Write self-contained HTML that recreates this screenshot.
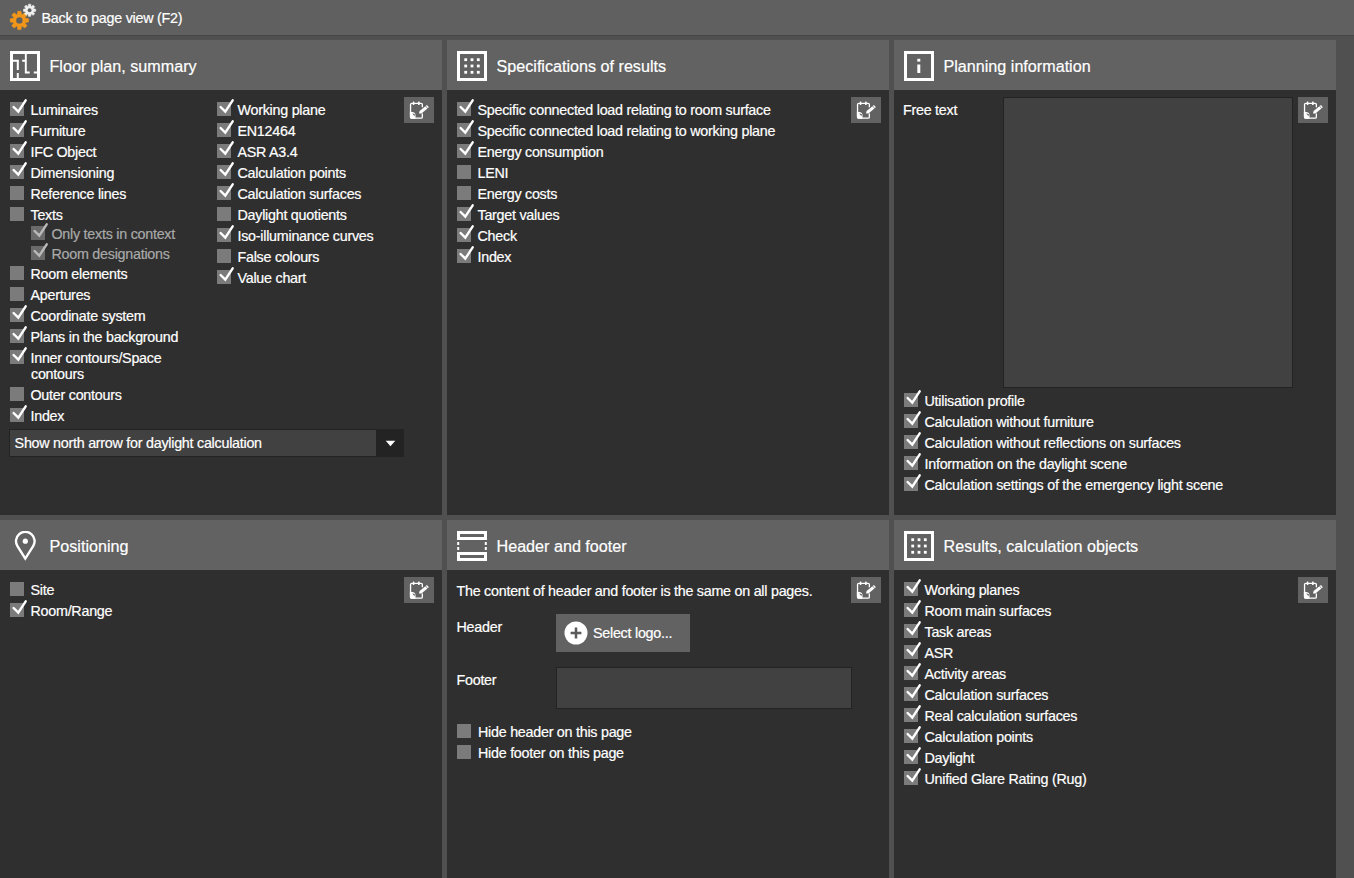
<!DOCTYPE html>
<html><head><meta charset="utf-8"><style>
html,body{margin:0;padding:0;}
body{width:1354px;height:878px;overflow:hidden;position:relative;background:#505050;font-family:"Liberation Sans",sans-serif;}
.t{position:absolute;white-space:nowrap;line-height:1;-webkit-text-stroke:0.2px currentColor;}
.cb{position:absolute;width:14px;height:14px;}
.ck{position:absolute;}
.ph{position:absolute;background:#626262;}
.pb{position:absolute;background:#2f2f2f;}
.ic{position:absolute;width:30px;height:30px;}
.ic svg{display:block;}
.eb{position:absolute;width:30px;height:26px;background:#626262;}
.eb svg{display:block;}
</style></head><body>
<div style="position:absolute;left:0;top:0;width:1354px;height:35px;background:#606060"></div><div style="position:absolute;left:0;top:35px;width:1354px;height:1px;background:#454545"></div><svg width="40" height="34" viewBox="0 0 40 34" style="position:absolute;left:0;top:0"><path d="M17.34 14.55 L17.81 11.24 L20.99 11.24 L21.46 14.55 L22.08 14.81 L24.75 12.80 L27.00 15.05 L24.99 17.72 L25.25 18.34 L28.56 18.81 L28.56 21.99 L25.25 22.46 L24.99 23.08 L27.00 25.75 L24.75 28.00 L22.08 25.99 L21.46 26.25 L20.99 29.56 L17.81 29.56 L17.34 26.25 L16.72 25.99 L14.05 28.00 L11.80 25.75 L13.81 23.08 L13.55 22.46 L10.24 21.99 L10.24 18.81 L13.55 18.34 L13.81 17.72 L11.80 15.05 L14.05 12.80 L16.72 14.81 Z" fill="#f2961a" stroke="#f2961a" stroke-width="0.6" stroke-linejoin="round"/><circle cx="19.4" cy="20.4" r="3.2" fill="#606060"/><path d="M28.22 6.18 L28.51 4.15 L30.69 4.15 L30.98 6.18 L31.51 6.40 L33.14 5.16 L34.69 6.71 L33.45 8.34 L33.67 8.87 L35.70 9.16 L35.70 11.34 L33.67 11.63 L33.45 12.16 L34.69 13.79 L33.14 15.34 L31.51 14.10 L30.98 14.32 L30.69 16.35 L28.51 16.35 L28.22 14.32 L27.69 14.10 L26.06 15.34 L24.51 13.79 L25.75 12.16 L25.53 11.63 L23.50 11.34 L23.50 9.16 L25.53 8.87 L25.75 8.34 L24.51 6.71 L26.06 5.16 L27.69 6.40 Z" fill="#efefef" stroke="#efefef" stroke-width="0.6" stroke-linejoin="round"/><circle cx="29.6" cy="10.25" r="1.9" fill="#606060"/></svg><div class="t" style="left:41.5px;top:11.00px;font-size:14.3px;color:#ffffff;letter-spacing:-0.25px;">Back to page view (F2)</div><div class="ph" style="left:0px;top:40px;width:442px;height:50px"></div><div class="pb" style="left:0px;top:90px;width:442px;height:425px"></div><div class="ic" style="left:10px;top:51px"><svg width="30" height="30" viewBox="0 0 30 30">
<rect x="1.5" y="1.5" width="27" height="27" fill="none" stroke="#fff" stroke-width="3"/>
<path d="M3 9.8 H8.5 M12.2 9.8 H16" stroke="#fff" stroke-width="1.9" fill="none"/>
<path d="M7.8 9 V19 M7.8 22 V28" stroke="#fff" stroke-width="2" fill="none"/>
<path d="M15.8 3 V21.5 H19.7 M23.8 21.5 H27" stroke="#fff" stroke-width="1.9" fill="none"/>
</svg></div><div class="t" style="left:49.5px;top:58.00px;font-size:16.15px;color:#ffffff;">Floor plan, summary</div><div class="ph" style="left:447px;top:40px;width:442px;height:50px"></div><div class="pb" style="left:447px;top:90px;width:442px;height:425px"></div><div class="ic" style="left:457px;top:51px"><svg width="30" height="30" viewBox="0 0 30 30">
<rect x="1.5" y="1.5" width="27" height="27" fill="none" stroke="#fff" stroke-width="3"/>
<rect x="7.30" y="7.30" width="2.8" height="2.8" fill="#fff"/><rect x="7.30" y="13.60" width="2.8" height="2.8" fill="#fff"/><rect x="7.30" y="19.90" width="2.8" height="2.8" fill="#fff"/><rect x="13.60" y="7.30" width="2.8" height="2.8" fill="#fff"/><rect x="13.60" y="13.60" width="2.8" height="2.8" fill="#fff"/><rect x="13.60" y="19.90" width="2.8" height="2.8" fill="#fff"/><rect x="19.90" y="7.30" width="2.8" height="2.8" fill="#fff"/><rect x="19.90" y="13.60" width="2.8" height="2.8" fill="#fff"/><rect x="19.90" y="19.90" width="2.8" height="2.8" fill="#fff"/>
</svg></div><div class="t" style="left:496.5px;top:58.00px;font-size:16.15px;color:#ffffff;">Specifications of results</div><div class="ph" style="left:894px;top:40px;width:442px;height:50px"></div><div class="pb" style="left:894px;top:90px;width:442px;height:425px"></div><div class="ic" style="left:904px;top:51px"><svg width="30" height="30" viewBox="0 0 30 30">
<rect x="1.5" y="1.5" width="27" height="27" fill="none" stroke="#fff" stroke-width="3"/>
<rect x="13.3" y="13.5" width="3" height="8.5" fill="#fff"/>
<rect x="13.3" y="7.8" width="3" height="2.8" fill="#fff"/>
</svg></div><div class="t" style="left:943.5px;top:58.00px;font-size:16.15px;color:#ffffff;">Planning information</div><div class="ph" style="left:0px;top:520px;width:442px;height:50px"></div><div class="pb" style="left:0px;top:570px;width:442px;height:308px"></div><div class="ic" style="left:10px;top:531px"><svg width="30" height="30" viewBox="0 0 30 30">
<path d="M15.3 27.6 L7.44 15.17 A9.3 9.3 0 1 1 23.16 15.17 Z" fill="none" stroke="#fff" stroke-width="2.4" stroke-linejoin="miter"/>
<circle cx="15.3" cy="10.2" r="2.6" fill="#fff"/>
</svg></div><div class="t" style="left:49.5px;top:538.00px;font-size:16.15px;color:#ffffff;">Positioning</div><div class="ph" style="left:447px;top:520px;width:442px;height:50px"></div><div class="pb" style="left:447px;top:570px;width:442px;height:308px"></div><div class="ic" style="left:457px;top:531px"><svg width="30" height="30" viewBox="0 0 30 30">
<rect x="1.5" y="1.5" width="27" height="6" fill="none" stroke="#fff" stroke-width="3"/>
<rect x="1.5" y="22.5" width="27" height="6" fill="none" stroke="#fff" stroke-width="3"/>
<rect x="0.2" y="11" width="2" height="3" fill="#fff"/>
<rect x="0.2" y="16" width="2" height="3" fill="#fff"/>
<rect x="27.8" y="11" width="2" height="3" fill="#fff"/>
<rect x="27.8" y="16" width="2" height="3" fill="#fff"/>
</svg></div><div class="t" style="left:496.5px;top:538.00px;font-size:16.15px;color:#ffffff;">Header and footer</div><div class="ph" style="left:894px;top:520px;width:442px;height:50px"></div><div class="pb" style="left:894px;top:570px;width:442px;height:308px"></div><div class="ic" style="left:904px;top:531px"><svg width="30" height="30" viewBox="0 0 30 30">
<rect x="1.5" y="1.5" width="27" height="27" fill="none" stroke="#fff" stroke-width="3"/>
<rect x="7.30" y="7.30" width="2.8" height="2.8" fill="#fff"/><rect x="7.30" y="13.60" width="2.8" height="2.8" fill="#fff"/><rect x="7.30" y="19.90" width="2.8" height="2.8" fill="#fff"/><rect x="13.60" y="7.30" width="2.8" height="2.8" fill="#fff"/><rect x="13.60" y="13.60" width="2.8" height="2.8" fill="#fff"/><rect x="13.60" y="19.90" width="2.8" height="2.8" fill="#fff"/><rect x="19.90" y="7.30" width="2.8" height="2.8" fill="#fff"/><rect x="19.90" y="13.60" width="2.8" height="2.8" fill="#fff"/><rect x="19.90" y="19.90" width="2.8" height="2.8" fill="#fff"/>
</svg></div><div class="t" style="left:943.5px;top:538.00px;font-size:16.15px;color:#ffffff;">Results, calculation objects</div><div class="cb" style="left:10px;top:102px;background:#7b7b7b"></div><svg class="ck" style="left:8px;top:96px" width="22" height="22" viewBox="0 0 22 22"><path d="M5.6 11 L10.3 15.7 L17.7 4.3" fill="none" stroke="#ffffff" stroke-width="2.4" stroke-linecap="round" stroke-linejoin="miter"/></svg><div class="t" style="left:30.5px;top:103.00px;font-size:14.3px;color:#ffffff;letter-spacing:-0.25px;">Luminaires</div><div class="cb" style="left:10px;top:123px;background:#7b7b7b"></div><svg class="ck" style="left:8px;top:117px" width="22" height="22" viewBox="0 0 22 22"><path d="M5.6 11 L10.3 15.7 L17.7 4.3" fill="none" stroke="#ffffff" stroke-width="2.4" stroke-linecap="round" stroke-linejoin="miter"/></svg><div class="t" style="left:30.5px;top:124.00px;font-size:14.3px;color:#ffffff;letter-spacing:-0.25px;">Furniture</div><div class="cb" style="left:10px;top:144px;background:#7b7b7b"></div><svg class="ck" style="left:8px;top:138px" width="22" height="22" viewBox="0 0 22 22"><path d="M5.6 11 L10.3 15.7 L17.7 4.3" fill="none" stroke="#ffffff" stroke-width="2.4" stroke-linecap="round" stroke-linejoin="miter"/></svg><div class="t" style="left:30.5px;top:145.00px;font-size:14.3px;color:#ffffff;letter-spacing:-0.25px;">IFC Object</div><div class="cb" style="left:10px;top:165px;background:#7b7b7b"></div><svg class="ck" style="left:8px;top:159px" width="22" height="22" viewBox="0 0 22 22"><path d="M5.6 11 L10.3 15.7 L17.7 4.3" fill="none" stroke="#ffffff" stroke-width="2.4" stroke-linecap="round" stroke-linejoin="miter"/></svg><div class="t" style="left:30.5px;top:166.00px;font-size:14.3px;color:#ffffff;letter-spacing:-0.25px;">Dimensioning</div><div class="cb" style="left:10px;top:186px;background:#7b7b7b"></div><div class="t" style="left:30.5px;top:187.00px;font-size:14.3px;color:#ffffff;letter-spacing:-0.25px;">Reference lines</div><div class="cb" style="left:10px;top:207px;background:#7b7b7b"></div><div class="t" style="left:30.5px;top:208.00px;font-size:14.3px;color:#ffffff;letter-spacing:-0.25px;">Texts</div><div class="cb" style="left:31px;top:226px;background:#6a6a6a"></div><svg class="ck" style="left:29px;top:220px" width="22" height="22" viewBox="0 0 22 22"><path d="M5.6 11 L10.3 15.7 L17.7 4.3" fill="none" stroke="#b9b9b9" stroke-width="2.4" stroke-linecap="round" stroke-linejoin="miter"/></svg><div class="t" style="left:51.5px;top:227.00px;font-size:14.3px;color:#a9a9a9;letter-spacing:-0.25px;">Only texts in context</div><div class="cb" style="left:31px;top:246px;background:#6a6a6a"></div><svg class="ck" style="left:29px;top:240px" width="22" height="22" viewBox="0 0 22 22"><path d="M5.6 11 L10.3 15.7 L17.7 4.3" fill="none" stroke="#b9b9b9" stroke-width="2.4" stroke-linecap="round" stroke-linejoin="miter"/></svg><div class="t" style="left:51.5px;top:247.00px;font-size:14.3px;color:#a9a9a9;letter-spacing:-0.25px;">Room designations</div><div class="cb" style="left:10px;top:266px;background:#7b7b7b"></div><div class="t" style="left:30.5px;top:267.00px;font-size:14.3px;color:#ffffff;letter-spacing:-0.25px;">Room elements</div><div class="cb" style="left:10px;top:287px;background:#7b7b7b"></div><div class="t" style="left:30.5px;top:288.00px;font-size:14.3px;color:#ffffff;letter-spacing:-0.25px;">Apertures</div><div class="cb" style="left:10px;top:308px;background:#7b7b7b"></div><svg class="ck" style="left:8px;top:302px" width="22" height="22" viewBox="0 0 22 22"><path d="M5.6 11 L10.3 15.7 L17.7 4.3" fill="none" stroke="#ffffff" stroke-width="2.4" stroke-linecap="round" stroke-linejoin="miter"/></svg><div class="t" style="left:30.5px;top:309.00px;font-size:14.3px;color:#ffffff;letter-spacing:-0.25px;">Coordinate system</div><div class="cb" style="left:10px;top:329px;background:#7b7b7b"></div><svg class="ck" style="left:8px;top:323px" width="22" height="22" viewBox="0 0 22 22"><path d="M5.6 11 L10.3 15.7 L17.7 4.3" fill="none" stroke="#ffffff" stroke-width="2.4" stroke-linecap="round" stroke-linejoin="miter"/></svg><div class="t" style="left:30.5px;top:330.00px;font-size:14.3px;color:#ffffff;letter-spacing:-0.25px;">Plans in the background</div><div class="cb" style="left:10px;top:350px;background:#7b7b7b"></div><svg class="ck" style="left:8px;top:344px" width="22" height="22" viewBox="0 0 22 22"><path d="M5.6 11 L10.3 15.7 L17.7 4.3" fill="none" stroke="#ffffff" stroke-width="2.4" stroke-linecap="round" stroke-linejoin="miter"/></svg><div class="t" style="left:30.5px;top:351.00px;font-size:14.3px;color:#ffffff;letter-spacing:-0.25px;">Inner contours/Space</div><div class="t" style="left:31px;top:367.00px;font-size:14.3px;color:#ffffff;letter-spacing:-0.25px;">contours</div><div class="cb" style="left:10px;top:387px;background:#7b7b7b"></div><div class="t" style="left:30.5px;top:388.00px;font-size:14.3px;color:#ffffff;letter-spacing:-0.25px;">Outer contours</div><div class="cb" style="left:10px;top:408px;background:#7b7b7b"></div><svg class="ck" style="left:8px;top:402px" width="22" height="22" viewBox="0 0 22 22"><path d="M5.6 11 L10.3 15.7 L17.7 4.3" fill="none" stroke="#ffffff" stroke-width="2.4" stroke-linecap="round" stroke-linejoin="miter"/></svg><div class="t" style="left:30.5px;top:409.00px;font-size:14.3px;color:#ffffff;letter-spacing:-0.25px;">Index</div><div class="cb" style="left:217px;top:102px;background:#7b7b7b"></div><svg class="ck" style="left:215px;top:96px" width="22" height="22" viewBox="0 0 22 22"><path d="M5.6 11 L10.3 15.7 L17.7 4.3" fill="none" stroke="#ffffff" stroke-width="2.4" stroke-linecap="round" stroke-linejoin="miter"/></svg><div class="t" style="left:237.5px;top:103.00px;font-size:14.3px;color:#ffffff;letter-spacing:-0.25px;">Working plane</div><div class="cb" style="left:217px;top:123px;background:#7b7b7b"></div><svg class="ck" style="left:215px;top:117px" width="22" height="22" viewBox="0 0 22 22"><path d="M5.6 11 L10.3 15.7 L17.7 4.3" fill="none" stroke="#ffffff" stroke-width="2.4" stroke-linecap="round" stroke-linejoin="miter"/></svg><div class="t" style="left:237.5px;top:124.00px;font-size:14.3px;color:#ffffff;letter-spacing:-0.25px;">EN12464</div><div class="cb" style="left:217px;top:144px;background:#7b7b7b"></div><svg class="ck" style="left:215px;top:138px" width="22" height="22" viewBox="0 0 22 22"><path d="M5.6 11 L10.3 15.7 L17.7 4.3" fill="none" stroke="#ffffff" stroke-width="2.4" stroke-linecap="round" stroke-linejoin="miter"/></svg><div class="t" style="left:237.5px;top:145.00px;font-size:14.3px;color:#ffffff;letter-spacing:-0.25px;">ASR A3.4</div><div class="cb" style="left:217px;top:165px;background:#7b7b7b"></div><svg class="ck" style="left:215px;top:159px" width="22" height="22" viewBox="0 0 22 22"><path d="M5.6 11 L10.3 15.7 L17.7 4.3" fill="none" stroke="#ffffff" stroke-width="2.4" stroke-linecap="round" stroke-linejoin="miter"/></svg><div class="t" style="left:237.5px;top:166.00px;font-size:14.3px;color:#ffffff;letter-spacing:-0.25px;">Calculation points</div><div class="cb" style="left:217px;top:186px;background:#7b7b7b"></div><svg class="ck" style="left:215px;top:180px" width="22" height="22" viewBox="0 0 22 22"><path d="M5.6 11 L10.3 15.7 L17.7 4.3" fill="none" stroke="#ffffff" stroke-width="2.4" stroke-linecap="round" stroke-linejoin="miter"/></svg><div class="t" style="left:237.5px;top:187.00px;font-size:14.3px;color:#ffffff;letter-spacing:-0.25px;">Calculation surfaces</div><div class="cb" style="left:217px;top:207px;background:#7b7b7b"></div><div class="t" style="left:237.5px;top:208.00px;font-size:14.3px;color:#ffffff;letter-spacing:-0.25px;">Daylight quotients</div><div class="cb" style="left:217px;top:228px;background:#7b7b7b"></div><svg class="ck" style="left:215px;top:222px" width="22" height="22" viewBox="0 0 22 22"><path d="M5.6 11 L10.3 15.7 L17.7 4.3" fill="none" stroke="#ffffff" stroke-width="2.4" stroke-linecap="round" stroke-linejoin="miter"/></svg><div class="t" style="left:237.5px;top:229.00px;font-size:14.3px;color:#ffffff;letter-spacing:-0.25px;">Iso-illuminance curves</div><div class="cb" style="left:217px;top:249px;background:#7b7b7b"></div><div class="t" style="left:237.5px;top:250.00px;font-size:14.3px;color:#ffffff;letter-spacing:-0.25px;">False colours</div><div class="cb" style="left:217px;top:270px;background:#7b7b7b"></div><svg class="ck" style="left:215px;top:264px" width="22" height="22" viewBox="0 0 22 22"><path d="M5.6 11 L10.3 15.7 L17.7 4.3" fill="none" stroke="#ffffff" stroke-width="2.4" stroke-linecap="round" stroke-linejoin="miter"/></svg><div class="t" style="left:237.5px;top:271.00px;font-size:14.3px;color:#ffffff;letter-spacing:-0.25px;">Value chart</div><div class="eb" style="left:404px;top:97px"><svg width="30" height="26" viewBox="0 0 30 26">
<path d="M18.35 10.3 V7.6 Q18.35 6.4 17.15 6.4 H7.75 Q6.55 6.4 6.55 7.6 V19.95 Q6.55 21.15 7.75 21.15 H17.15 Q18.35 21.15 18.35 19.95 V16.5" fill="none" stroke="#fff" stroke-width="1.3"/>
<rect x="8.8" y="4.5" width="1.5" height="3.6" rx="0.4" fill="#fff"/>
<rect x="14.05" y="4.5" width="1.6" height="3.6" rx="0.4" fill="#fff"/>
<path d="M5.9 14.8 Q11.5 14.8 11.5 18 V21.8 H7.9 Q5.9 21.8 5.9 19.8 Z" fill="#fff"/>
<path d="M8.2 16.5 L10.9 17.1 L10.5 19.3 Z" fill="#626262"/>
<path d="M15 16.5 L15.6 14.07 L22.95 8.04 L24.85 10.36 L17.5 16.4 Z" fill="#fff"/>
<path d="M21.5 8.9 L23.7 11.6" stroke="#626262" stroke-width="0.7"/>
</svg></div><div style="position:absolute;left:9px;top:429px;width:395px;height:28px;background:#232323"></div><div style="position:absolute;left:10px;top:430px;width:366px;height:26px;background:#414141"></div><svg style="position:absolute;left:385px;top:440px" width="11" height="7" viewBox="0 0 11 7"><path d="M0.7 0.8 H10.3 L5.5 6.2 Z" fill="#fff"/></svg><div class="t" style="left:14.6px;top:436.00px;font-size:14.3px;color:#ffffff;letter-spacing:-0.25px;">Show north arrow for daylight calculation</div><div class="cb" style="left:457px;top:102px;background:#7b7b7b"></div><svg class="ck" style="left:455px;top:96px" width="22" height="22" viewBox="0 0 22 22"><path d="M5.6 11 L10.3 15.7 L17.7 4.3" fill="none" stroke="#ffffff" stroke-width="2.4" stroke-linecap="round" stroke-linejoin="miter"/></svg><div class="t" style="left:477.5px;top:103.00px;font-size:14.3px;color:#ffffff;letter-spacing:-0.25px;">Specific connected load relating to room surface</div><div class="cb" style="left:457px;top:123px;background:#7b7b7b"></div><svg class="ck" style="left:455px;top:117px" width="22" height="22" viewBox="0 0 22 22"><path d="M5.6 11 L10.3 15.7 L17.7 4.3" fill="none" stroke="#ffffff" stroke-width="2.4" stroke-linecap="round" stroke-linejoin="miter"/></svg><div class="t" style="left:477.5px;top:124.00px;font-size:14.3px;color:#ffffff;letter-spacing:-0.25px;">Specific connected load relating to working plane</div><div class="cb" style="left:457px;top:144px;background:#7b7b7b"></div><svg class="ck" style="left:455px;top:138px" width="22" height="22" viewBox="0 0 22 22"><path d="M5.6 11 L10.3 15.7 L17.7 4.3" fill="none" stroke="#ffffff" stroke-width="2.4" stroke-linecap="round" stroke-linejoin="miter"/></svg><div class="t" style="left:477.5px;top:145.00px;font-size:14.3px;color:#ffffff;letter-spacing:-0.25px;">Energy consumption</div><div class="cb" style="left:457px;top:165px;background:#7b7b7b"></div><div class="t" style="left:477.5px;top:166.00px;font-size:14.3px;color:#ffffff;letter-spacing:-0.25px;">LENI</div><div class="cb" style="left:457px;top:186px;background:#7b7b7b"></div><div class="t" style="left:477.5px;top:187.00px;font-size:14.3px;color:#ffffff;letter-spacing:-0.25px;">Energy costs</div><div class="cb" style="left:457px;top:207px;background:#7b7b7b"></div><svg class="ck" style="left:455px;top:201px" width="22" height="22" viewBox="0 0 22 22"><path d="M5.6 11 L10.3 15.7 L17.7 4.3" fill="none" stroke="#ffffff" stroke-width="2.4" stroke-linecap="round" stroke-linejoin="miter"/></svg><div class="t" style="left:477.5px;top:208.00px;font-size:14.3px;color:#ffffff;letter-spacing:-0.25px;">Target values</div><div class="cb" style="left:457px;top:228px;background:#7b7b7b"></div><svg class="ck" style="left:455px;top:222px" width="22" height="22" viewBox="0 0 22 22"><path d="M5.6 11 L10.3 15.7 L17.7 4.3" fill="none" stroke="#ffffff" stroke-width="2.4" stroke-linecap="round" stroke-linejoin="miter"/></svg><div class="t" style="left:477.5px;top:229.00px;font-size:14.3px;color:#ffffff;letter-spacing:-0.25px;">Check</div><div class="cb" style="left:457px;top:249px;background:#7b7b7b"></div><svg class="ck" style="left:455px;top:243px" width="22" height="22" viewBox="0 0 22 22"><path d="M5.6 11 L10.3 15.7 L17.7 4.3" fill="none" stroke="#ffffff" stroke-width="2.4" stroke-linecap="round" stroke-linejoin="miter"/></svg><div class="t" style="left:477.5px;top:250.00px;font-size:14.3px;color:#ffffff;letter-spacing:-0.25px;">Index</div><div class="eb" style="left:851px;top:97px"><svg width="30" height="26" viewBox="0 0 30 26">
<path d="M18.35 10.3 V7.6 Q18.35 6.4 17.15 6.4 H7.75 Q6.55 6.4 6.55 7.6 V19.95 Q6.55 21.15 7.75 21.15 H17.15 Q18.35 21.15 18.35 19.95 V16.5" fill="none" stroke="#fff" stroke-width="1.3"/>
<rect x="8.8" y="4.5" width="1.5" height="3.6" rx="0.4" fill="#fff"/>
<rect x="14.05" y="4.5" width="1.6" height="3.6" rx="0.4" fill="#fff"/>
<path d="M5.9 14.8 Q11.5 14.8 11.5 18 V21.8 H7.9 Q5.9 21.8 5.9 19.8 Z" fill="#fff"/>
<path d="M8.2 16.5 L10.9 17.1 L10.5 19.3 Z" fill="#626262"/>
<path d="M15 16.5 L15.6 14.07 L22.95 8.04 L24.85 10.36 L17.5 16.4 Z" fill="#fff"/>
<path d="M21.5 8.9 L23.7 11.6" stroke="#626262" stroke-width="0.7"/>
</svg></div><div class="t" style="left:903px;top:103.00px;font-size:14.3px;color:#ffffff;letter-spacing:-0.25px;">Free text</div><div style="position:absolute;left:1003px;top:97px;width:288px;height:289px;background:#414141;border:1px solid #232323"></div><div class="eb" style="left:1298px;top:97px"><svg width="30" height="26" viewBox="0 0 30 26">
<path d="M18.35 10.3 V7.6 Q18.35 6.4 17.15 6.4 H7.75 Q6.55 6.4 6.55 7.6 V19.95 Q6.55 21.15 7.75 21.15 H17.15 Q18.35 21.15 18.35 19.95 V16.5" fill="none" stroke="#fff" stroke-width="1.3"/>
<rect x="8.8" y="4.5" width="1.5" height="3.6" rx="0.4" fill="#fff"/>
<rect x="14.05" y="4.5" width="1.6" height="3.6" rx="0.4" fill="#fff"/>
<path d="M5.9 14.8 Q11.5 14.8 11.5 18 V21.8 H7.9 Q5.9 21.8 5.9 19.8 Z" fill="#fff"/>
<path d="M8.2 16.5 L10.9 17.1 L10.5 19.3 Z" fill="#626262"/>
<path d="M15 16.5 L15.6 14.07 L22.95 8.04 L24.85 10.36 L17.5 16.4 Z" fill="#fff"/>
<path d="M21.5 8.9 L23.7 11.6" stroke="#626262" stroke-width="0.7"/>
</svg></div><div class="cb" style="left:904px;top:393px;background:#7b7b7b"></div><svg class="ck" style="left:902px;top:387px" width="22" height="22" viewBox="0 0 22 22"><path d="M5.6 11 L10.3 15.7 L17.7 4.3" fill="none" stroke="#ffffff" stroke-width="2.4" stroke-linecap="round" stroke-linejoin="miter"/></svg><div class="t" style="left:924.5px;top:394.00px;font-size:14.3px;color:#ffffff;letter-spacing:-0.25px;">Utilisation profile</div><div class="cb" style="left:904px;top:414px;background:#7b7b7b"></div><svg class="ck" style="left:902px;top:408px" width="22" height="22" viewBox="0 0 22 22"><path d="M5.6 11 L10.3 15.7 L17.7 4.3" fill="none" stroke="#ffffff" stroke-width="2.4" stroke-linecap="round" stroke-linejoin="miter"/></svg><div class="t" style="left:924.5px;top:415.00px;font-size:14.3px;color:#ffffff;letter-spacing:-0.25px;">Calculation without furniture</div><div class="cb" style="left:904px;top:435px;background:#7b7b7b"></div><svg class="ck" style="left:902px;top:429px" width="22" height="22" viewBox="0 0 22 22"><path d="M5.6 11 L10.3 15.7 L17.7 4.3" fill="none" stroke="#ffffff" stroke-width="2.4" stroke-linecap="round" stroke-linejoin="miter"/></svg><div class="t" style="left:924.5px;top:436.00px;font-size:14.3px;color:#ffffff;letter-spacing:-0.25px;">Calculation without reflections on surfaces</div><div class="cb" style="left:904px;top:456px;background:#7b7b7b"></div><svg class="ck" style="left:902px;top:450px" width="22" height="22" viewBox="0 0 22 22"><path d="M5.6 11 L10.3 15.7 L17.7 4.3" fill="none" stroke="#ffffff" stroke-width="2.4" stroke-linecap="round" stroke-linejoin="miter"/></svg><div class="t" style="left:924.5px;top:457.00px;font-size:14.3px;color:#ffffff;letter-spacing:-0.25px;">Information on the daylight scene</div><div class="cb" style="left:904px;top:477px;background:#7b7b7b"></div><svg class="ck" style="left:902px;top:471px" width="22" height="22" viewBox="0 0 22 22"><path d="M5.6 11 L10.3 15.7 L17.7 4.3" fill="none" stroke="#ffffff" stroke-width="2.4" stroke-linecap="round" stroke-linejoin="miter"/></svg><div class="t" style="left:924.5px;top:478.00px;font-size:14.3px;color:#ffffff;letter-spacing:-0.25px;">Calculation settings of the emergency light scene</div><div class="cb" style="left:10px;top:582px;background:#7b7b7b"></div><div class="t" style="left:30.5px;top:583.00px;font-size:14.3px;color:#ffffff;letter-spacing:-0.25px;">Site</div><div class="cb" style="left:10px;top:603px;background:#7b7b7b"></div><svg class="ck" style="left:8px;top:597px" width="22" height="22" viewBox="0 0 22 22"><path d="M5.6 11 L10.3 15.7 L17.7 4.3" fill="none" stroke="#ffffff" stroke-width="2.4" stroke-linecap="round" stroke-linejoin="miter"/></svg><div class="t" style="left:30.5px;top:604.00px;font-size:14.3px;color:#ffffff;letter-spacing:-0.25px;">Room/Range</div><div class="eb" style="left:404px;top:577px"><svg width="30" height="26" viewBox="0 0 30 26">
<path d="M18.35 10.3 V7.6 Q18.35 6.4 17.15 6.4 H7.75 Q6.55 6.4 6.55 7.6 V19.95 Q6.55 21.15 7.75 21.15 H17.15 Q18.35 21.15 18.35 19.95 V16.5" fill="none" stroke="#fff" stroke-width="1.3"/>
<rect x="8.8" y="4.5" width="1.5" height="3.6" rx="0.4" fill="#fff"/>
<rect x="14.05" y="4.5" width="1.6" height="3.6" rx="0.4" fill="#fff"/>
<path d="M5.9 14.8 Q11.5 14.8 11.5 18 V21.8 H7.9 Q5.9 21.8 5.9 19.8 Z" fill="#fff"/>
<path d="M8.2 16.5 L10.9 17.1 L10.5 19.3 Z" fill="#626262"/>
<path d="M15 16.5 L15.6 14.07 L22.95 8.04 L24.85 10.36 L17.5 16.4 Z" fill="#fff"/>
<path d="M21.5 8.9 L23.7 11.6" stroke="#626262" stroke-width="0.7"/>
</svg></div><div class="t" style="left:456.5px;top:584.00px;font-size:14.3px;color:#ffffff;letter-spacing:-0.25px;">The content of header and footer is the same on all pages.</div><div class="eb" style="left:851px;top:577px"><svg width="30" height="26" viewBox="0 0 30 26">
<path d="M18.35 10.3 V7.6 Q18.35 6.4 17.15 6.4 H7.75 Q6.55 6.4 6.55 7.6 V19.95 Q6.55 21.15 7.75 21.15 H17.15 Q18.35 21.15 18.35 19.95 V16.5" fill="none" stroke="#fff" stroke-width="1.3"/>
<rect x="8.8" y="4.5" width="1.5" height="3.6" rx="0.4" fill="#fff"/>
<rect x="14.05" y="4.5" width="1.6" height="3.6" rx="0.4" fill="#fff"/>
<path d="M5.9 14.8 Q11.5 14.8 11.5 18 V21.8 H7.9 Q5.9 21.8 5.9 19.8 Z" fill="#fff"/>
<path d="M8.2 16.5 L10.9 17.1 L10.5 19.3 Z" fill="#626262"/>
<path d="M15 16.5 L15.6 14.07 L22.95 8.04 L24.85 10.36 L17.5 16.4 Z" fill="#fff"/>
<path d="M21.5 8.9 L23.7 11.6" stroke="#626262" stroke-width="0.7"/>
</svg></div><div class="t" style="left:456.5px;top:620.00px;font-size:14.3px;color:#ffffff;letter-spacing:-0.25px;">Header</div><div style="position:absolute;left:556px;top:614px;width:134px;height:38px;background:#626262"></div><svg style="position:absolute;left:564px;top:621px" width="24" height="24" viewBox="0 0 24 24"><circle cx="12" cy="12" r="11.5" fill="#fff"/><path d="M12 6.6 V17.4 M6.6 12 H17.4" stroke="#5a5a5a" stroke-width="2.5"/></svg><div class="t" style="left:593px;top:626.00px;font-size:14.3px;color:#ffffff;letter-spacing:-0.25px;">Select logo...</div><div class="t" style="left:456.5px;top:673.00px;font-size:14.3px;color:#ffffff;letter-spacing:-0.25px;">Footer</div><div style="position:absolute;left:556px;top:667px;width:294px;height:40px;background:#414141;border:1px solid #232323"></div><div class="cb" style="left:457px;top:724px;background:#7b7b7b"></div><div class="t" style="left:478px;top:725.00px;font-size:14.3px;color:#ffffff;letter-spacing:-0.25px;">Hide header on this page</div><div class="cb" style="left:457px;top:745px;background:#7b7b7b"></div><div class="t" style="left:478px;top:746.00px;font-size:14.3px;color:#ffffff;letter-spacing:-0.25px;">Hide footer on this page</div><div class="cb" style="left:904px;top:582px;background:#7b7b7b"></div><svg class="ck" style="left:902px;top:576px" width="22" height="22" viewBox="0 0 22 22"><path d="M5.6 11 L10.3 15.7 L17.7 4.3" fill="none" stroke="#ffffff" stroke-width="2.4" stroke-linecap="round" stroke-linejoin="miter"/></svg><div class="t" style="left:924.5px;top:583.00px;font-size:14.3px;color:#ffffff;letter-spacing:-0.25px;">Working planes</div><div class="cb" style="left:904px;top:603px;background:#7b7b7b"></div><svg class="ck" style="left:902px;top:597px" width="22" height="22" viewBox="0 0 22 22"><path d="M5.6 11 L10.3 15.7 L17.7 4.3" fill="none" stroke="#ffffff" stroke-width="2.4" stroke-linecap="round" stroke-linejoin="miter"/></svg><div class="t" style="left:924.5px;top:604.00px;font-size:14.3px;color:#ffffff;letter-spacing:-0.25px;">Room main surfaces</div><div class="cb" style="left:904px;top:624px;background:#7b7b7b"></div><svg class="ck" style="left:902px;top:618px" width="22" height="22" viewBox="0 0 22 22"><path d="M5.6 11 L10.3 15.7 L17.7 4.3" fill="none" stroke="#ffffff" stroke-width="2.4" stroke-linecap="round" stroke-linejoin="miter"/></svg><div class="t" style="left:924.5px;top:625.00px;font-size:14.3px;color:#ffffff;letter-spacing:-0.25px;">Task areas</div><div class="cb" style="left:904px;top:645px;background:#7b7b7b"></div><svg class="ck" style="left:902px;top:639px" width="22" height="22" viewBox="0 0 22 22"><path d="M5.6 11 L10.3 15.7 L17.7 4.3" fill="none" stroke="#ffffff" stroke-width="2.4" stroke-linecap="round" stroke-linejoin="miter"/></svg><div class="t" style="left:924.5px;top:646.00px;font-size:14.3px;color:#ffffff;letter-spacing:-0.25px;">ASR</div><div class="cb" style="left:904px;top:666px;background:#7b7b7b"></div><svg class="ck" style="left:902px;top:660px" width="22" height="22" viewBox="0 0 22 22"><path d="M5.6 11 L10.3 15.7 L17.7 4.3" fill="none" stroke="#ffffff" stroke-width="2.4" stroke-linecap="round" stroke-linejoin="miter"/></svg><div class="t" style="left:924.5px;top:667.00px;font-size:14.3px;color:#ffffff;letter-spacing:-0.25px;">Activity areas</div><div class="cb" style="left:904px;top:687px;background:#7b7b7b"></div><svg class="ck" style="left:902px;top:681px" width="22" height="22" viewBox="0 0 22 22"><path d="M5.6 11 L10.3 15.7 L17.7 4.3" fill="none" stroke="#ffffff" stroke-width="2.4" stroke-linecap="round" stroke-linejoin="miter"/></svg><div class="t" style="left:924.5px;top:688.00px;font-size:14.3px;color:#ffffff;letter-spacing:-0.25px;">Calculation surfaces</div><div class="cb" style="left:904px;top:708px;background:#7b7b7b"></div><svg class="ck" style="left:902px;top:702px" width="22" height="22" viewBox="0 0 22 22"><path d="M5.6 11 L10.3 15.7 L17.7 4.3" fill="none" stroke="#ffffff" stroke-width="2.4" stroke-linecap="round" stroke-linejoin="miter"/></svg><div class="t" style="left:924.5px;top:709.00px;font-size:14.3px;color:#ffffff;letter-spacing:-0.25px;">Real calculation surfaces</div><div class="cb" style="left:904px;top:729px;background:#7b7b7b"></div><svg class="ck" style="left:902px;top:723px" width="22" height="22" viewBox="0 0 22 22"><path d="M5.6 11 L10.3 15.7 L17.7 4.3" fill="none" stroke="#ffffff" stroke-width="2.4" stroke-linecap="round" stroke-linejoin="miter"/></svg><div class="t" style="left:924.5px;top:730.00px;font-size:14.3px;color:#ffffff;letter-spacing:-0.25px;">Calculation points</div><div class="cb" style="left:904px;top:750px;background:#7b7b7b"></div><svg class="ck" style="left:902px;top:744px" width="22" height="22" viewBox="0 0 22 22"><path d="M5.6 11 L10.3 15.7 L17.7 4.3" fill="none" stroke="#ffffff" stroke-width="2.4" stroke-linecap="round" stroke-linejoin="miter"/></svg><div class="t" style="left:924.5px;top:751.00px;font-size:14.3px;color:#ffffff;letter-spacing:-0.25px;">Daylight</div><div class="cb" style="left:904px;top:771px;background:#7b7b7b"></div><svg class="ck" style="left:902px;top:765px" width="22" height="22" viewBox="0 0 22 22"><path d="M5.6 11 L10.3 15.7 L17.7 4.3" fill="none" stroke="#ffffff" stroke-width="2.4" stroke-linecap="round" stroke-linejoin="miter"/></svg><div class="t" style="left:924.5px;top:772.00px;font-size:14.3px;color:#ffffff;letter-spacing:-0.25px;">Unified Glare Rating (Rug)</div><div class="eb" style="left:1298px;top:577px"><svg width="30" height="26" viewBox="0 0 30 26">
<path d="M18.35 10.3 V7.6 Q18.35 6.4 17.15 6.4 H7.75 Q6.55 6.4 6.55 7.6 V19.95 Q6.55 21.15 7.75 21.15 H17.15 Q18.35 21.15 18.35 19.95 V16.5" fill="none" stroke="#fff" stroke-width="1.3"/>
<rect x="8.8" y="4.5" width="1.5" height="3.6" rx="0.4" fill="#fff"/>
<rect x="14.05" y="4.5" width="1.6" height="3.6" rx="0.4" fill="#fff"/>
<path d="M5.9 14.8 Q11.5 14.8 11.5 18 V21.8 H7.9 Q5.9 21.8 5.9 19.8 Z" fill="#fff"/>
<path d="M8.2 16.5 L10.9 17.1 L10.5 19.3 Z" fill="#626262"/>
<path d="M15 16.5 L15.6 14.07 L22.95 8.04 L24.85 10.36 L17.5 16.4 Z" fill="#fff"/>
<path d="M21.5 8.9 L23.7 11.6" stroke="#626262" stroke-width="0.7"/>
</svg></div>
</body></html>
